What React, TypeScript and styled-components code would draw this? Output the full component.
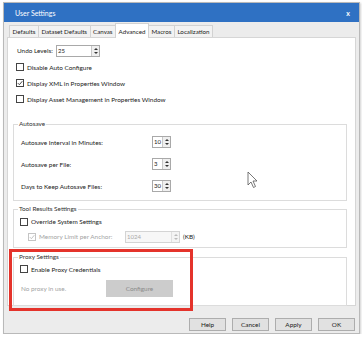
import React from "react";
import styled, { createGlobalStyle, css } from "styled-components";

const GlobalStyle = createGlobalStyle`
  html, body { margin: 0; padding: 0; background: #fff; }
  body {
    font-family: Lato, "Noto Sans", sans-serif;
    font-size: 6.4px;
    color: #222;
  }
`;

const Page = styled.div`
  padding: 2px 0 0 3px;
`;

const Window = styled.div`
  position: relative;
  width: 357px;
  height: 332px;
  box-sizing: border-box;
  background: #ececec;
  border: 1px solid #b9b9b9;
  box-shadow: 1px 1px 2px rgba(0, 0, 0, 0.18);
  display: flex;
  flex-direction: column;
`;

const TitleBar = styled.div`
  height: 19px;
  flex: none;
  background: #2f71c3;
  color: #fff;
  display: flex;
  align-items: center;
  justify-content: space-between;
  padding: 0 9px 0 11px;
  font-size: 7px;
`;

const Close = styled.span`
  font-weight: bold;
  font-size: 7px;
`;

const TabRow = styled.div`
  height: 15px;
  flex: none;
  display: flex;
  align-items: flex-end;
  padding-left: 5px;
  font-size: 6.2px;
`;

const Tab = styled.div<{ $active?: boolean }>`
  height: 12px;
  box-sizing: border-box;
  padding: 0 2.5px;
  display: flex;
  align-items: center;
  border: 1px solid #d2d2d2;
  border-bottom: none;
  margin-right: -1px;
  background: #f2f2f2;
  ${(p) =>
    p.$active &&
    css`
      background: #fff;
      position: relative;
      z-index: 1;
      margin-bottom: -1px;
      height: 15px;
    `}
`;

const Panel = styled.div`
  margin: 0 3px;
  height: 269px;
  flex: none;
  box-sizing: border-box;
  background: #fff;
  border: 1px solid #d6d6d6;
  display: flex;
  flex-direction: column;
`;

const TopSection = styled.div`
  padding: 6px 0 0 8px;
  display: flex;
  flex-direction: column;
`;

const Row = styled.div<{ $h: number; $indent?: number }>`
  height: ${(p) => p.$h}px;
  display: flex;
  align-items: center;
  padding-left: ${(p) => p.$indent ?? 0}px;
`;

const Label = styled.span<{ $w?: number; $muted?: boolean }>`
  ${(p) => p.$w && `width: ${p.$w}px; flex: none;`}
  color: ${(p) => (p.$muted ? "#a3a3a3" : "#222")};
  white-space: nowrap;
`;

const Box = styled.span<{ $disabled?: boolean }>`
  width: 8px;
  height: 8px;
  box-sizing: border-box;
  border: 1px solid ${(p) => (p.$disabled ? "#c4c4c4" : "#444")};
  background: #fff;
  margin-right: 3px;
  display: inline-flex;
  align-items: center;
  justify-content: center;
  flex: none;
`;

const Group = styled.fieldset<{ $top: number; $bottom?: number }>`
  margin: ${(p) => p.$top}px 8px 0 5px;
  padding: 0 6px ${(p) => p.$bottom ?? 3}px 6px;
  border: 1px solid #dcdcdc;
  min-width: 0;
`;

const Legend = styled.legend`
  padding: 0 1px;
  margin-left: -2px;
  line-height: 10px;
  color: #333;
`;

const Field = styled.div<{ $w: number; $disabled?: boolean }>`
  width: ${(p) => p.$w}px;
  height: 12px;
  box-sizing: border-box;
  border: 1px solid ${(p) => (p.$disabled ? "#d4d4d4" : "#a9a9a9")};
  background: ${(p) => (p.$disabled ? "#f7f7f7" : "#fff")};
  color: ${(p) => (p.$disabled ? "#a9a9a9" : "#222")};
  display: flex;
  align-items: flex-start;
  flex: none;
  font-size: 6px;
  line-height: 9px;
`;

const FieldText = styled.span`
  flex: 1;
  padding-left: 1px;
`;

const Spin = styled.div<{ $disabled?: boolean }>`
  width: 8px;
  height: 100%;
  box-sizing: border-box;
  border-left: 1px solid ${(p) => (p.$disabled ? "#e0e0e0" : "#c8c8c8")};
  background: ${(p) => (p.$disabled ? "#f4f4f4" : "#efefef")};
  display: flex;
  flex-direction: column;
  justify-content: space-evenly;
  align-items: center;
`;

const Tri = styled.span<{ $down?: boolean; $disabled?: boolean }>`
  width: 0;
  height: 0;
  border-left: 2px solid transparent;
  border-right: 2px solid transparent;
  ${(p) =>
    p.$down
      ? `border-top: 2px solid ${p.$disabled ? "#bbb" : "#333"};`
      : `border-bottom: 2px solid ${p.$disabled ? "#bbb" : "#333"};`}
`;

const GrayButton = styled.div`
  width: 67px;
  height: 17px;
  margin-left: 37px;
  background: #cccccc;
  color: #8a8a8a;
  display: flex;
  align-items: center;
  justify-content: center;
`;

const Footer = styled.div`
  display: flex;
  justify-content: flex-end;
  gap: 6px;
  padding: 12px 4px 0 0;
`;

const Button = styled.div`
  width: 37px;
  height: 13px;
  box-sizing: border-box;
  border: 1px solid #adadad;
  background: #e1e1e1;
  display: flex;
  align-items: center;
  justify-content: center;
`;

const Highlight = styled.div`
  position: absolute;
  left: 5px;
  top: 246px;
  width: 178px;
  height: 56px;
  border: 3px solid #e4332b;
  pointer-events: none;
`;

const Cursor = styled.svg`
  position: absolute;
  left: 243px;
  top: 168px;
`;

const Check = ({ on, disabled }: { on?: boolean; disabled?: boolean }) => (
  <Box $disabled={disabled}>
    {on && (
      <svg width="6" height="6" viewBox="0 0 6 6">
        <path
          d="M0.8 3.1 L2.4 4.7 L5.3 1.2"
          fill="none"
          stroke={disabled ? "#bdbdbd" : "#333"}
          strokeWidth="0.9"
        />
      </svg>
    )}
  </Box>
);

const Spinner = ({
  value,
  w,
  disabled,
}: {
  value: string;
  w: number;
  disabled?: boolean;
}) => (
  <Field $w={w} $disabled={disabled}>
    <FieldText>{value}</FieldText>
    <Spin $disabled={disabled}>
      <Tri $disabled={disabled} />
      <Tri $down $disabled={disabled} />
    </Spin>
  </Field>
);

export default function App() {
  return (
    <Page>
      <GlobalStyle />
      <Window>
        <TitleBar>
          <span>User Settings</span>
          <Close>x</Close>
        </TitleBar>
        <TabRow>
          <Tab>Defaults</Tab>
          <Tab>Dataset Defaults</Tab>
          <Tab>Canvas</Tab>
          <Tab $active>Advanced</Tab>
          <Tab>Macros</Tab>
          <Tab>Localization</Tab>
        </TabRow>
        <Panel>
          <TopSection>
            <Row $h={13} $indent={1}>
              <Label $w={39}>Undo Levels:</Label>
              <Spinner value="25" w={44} />
            </Row>
            <Row $h={16} style={{ marginTop: 2 }}>
              <Check />
              <Label>Disable Auto Configure</Label>
            </Row>
            <Row $h={16}>
              <Check on />
              <Label>Display XML in Properties Window</Label>
            </Row>
            <Row $h={16}>
              <Check />
              <Label>Display Asset Management in Properties Window</Label>
            </Row>
          </TopSection>

          <Group $top={12}>
            <Legend>Autosave</Legend>
            <Row $h={22} $indent={1} style={{ marginTop: 2 }}>
              <Label $w={131}>Autosave Interval in Minutes:</Label>
              <Spinner value="10" w={19} />
            </Row>
            <Row $h={22} $indent={1}>
              <Label $w={131}>Autosave per File:</Label>
              <Spinner value="3" w={19} />
            </Row>
            <Row $h={22} $indent={1}>
              <Label $w={131}>Days to Keep Autosave Files:</Label>
              <Spinner value="30" w={19} />
            </Row>
          </Group>

          <Group $top={3}>
            <Legend>Tool Results Settings</Legend>
            <Row $h={15}>
              <Check />
              <Label>Override System Settings</Label>
            </Row>
            <Row $h={15} $indent={8}>
              <Check on disabled />
              <Label $w={86} $muted>
                Memory Limit per Anchor:
              </Label>
              <Spinner value="1024" w={55} disabled />
              <Label style={{ marginLeft: 3 }}>(KB)</Label>
            </Row>
          </Group>

          <Group $top={4} $bottom={8}>
            <Legend>Proxy Settings</Legend>
            <Row $h={14}>
              <Check />
              <Label>Enable Proxy Credentials</Label>
            </Row>
            <Row $h={18} $indent={1} style={{ marginTop: 3 }}>
              <Label $w={48} $muted>
                No proxy in use.
              </Label>
              <GrayButton>Configure</GrayButton>
            </Row>
          </Group>
        </Panel>
        <Footer>
          <Button>Help</Button>
          <Button>Cancel</Button>
          <Button>Apply</Button>
          <Button>OK</Button>
        </Footer>
        <Highlight />
        <Cursor width="12" height="18" viewBox="0 0 12 18">
          <path
            d="M1 1 L1 14 L4 11 L6.5 16.5 L8.5 15.5 L6 10 L10 10 Z"
            fill="#fff"
            stroke="#555"
            strokeWidth="0.8"
          />
        </Cursor>
      </Window>
    </Page>
  );
}
